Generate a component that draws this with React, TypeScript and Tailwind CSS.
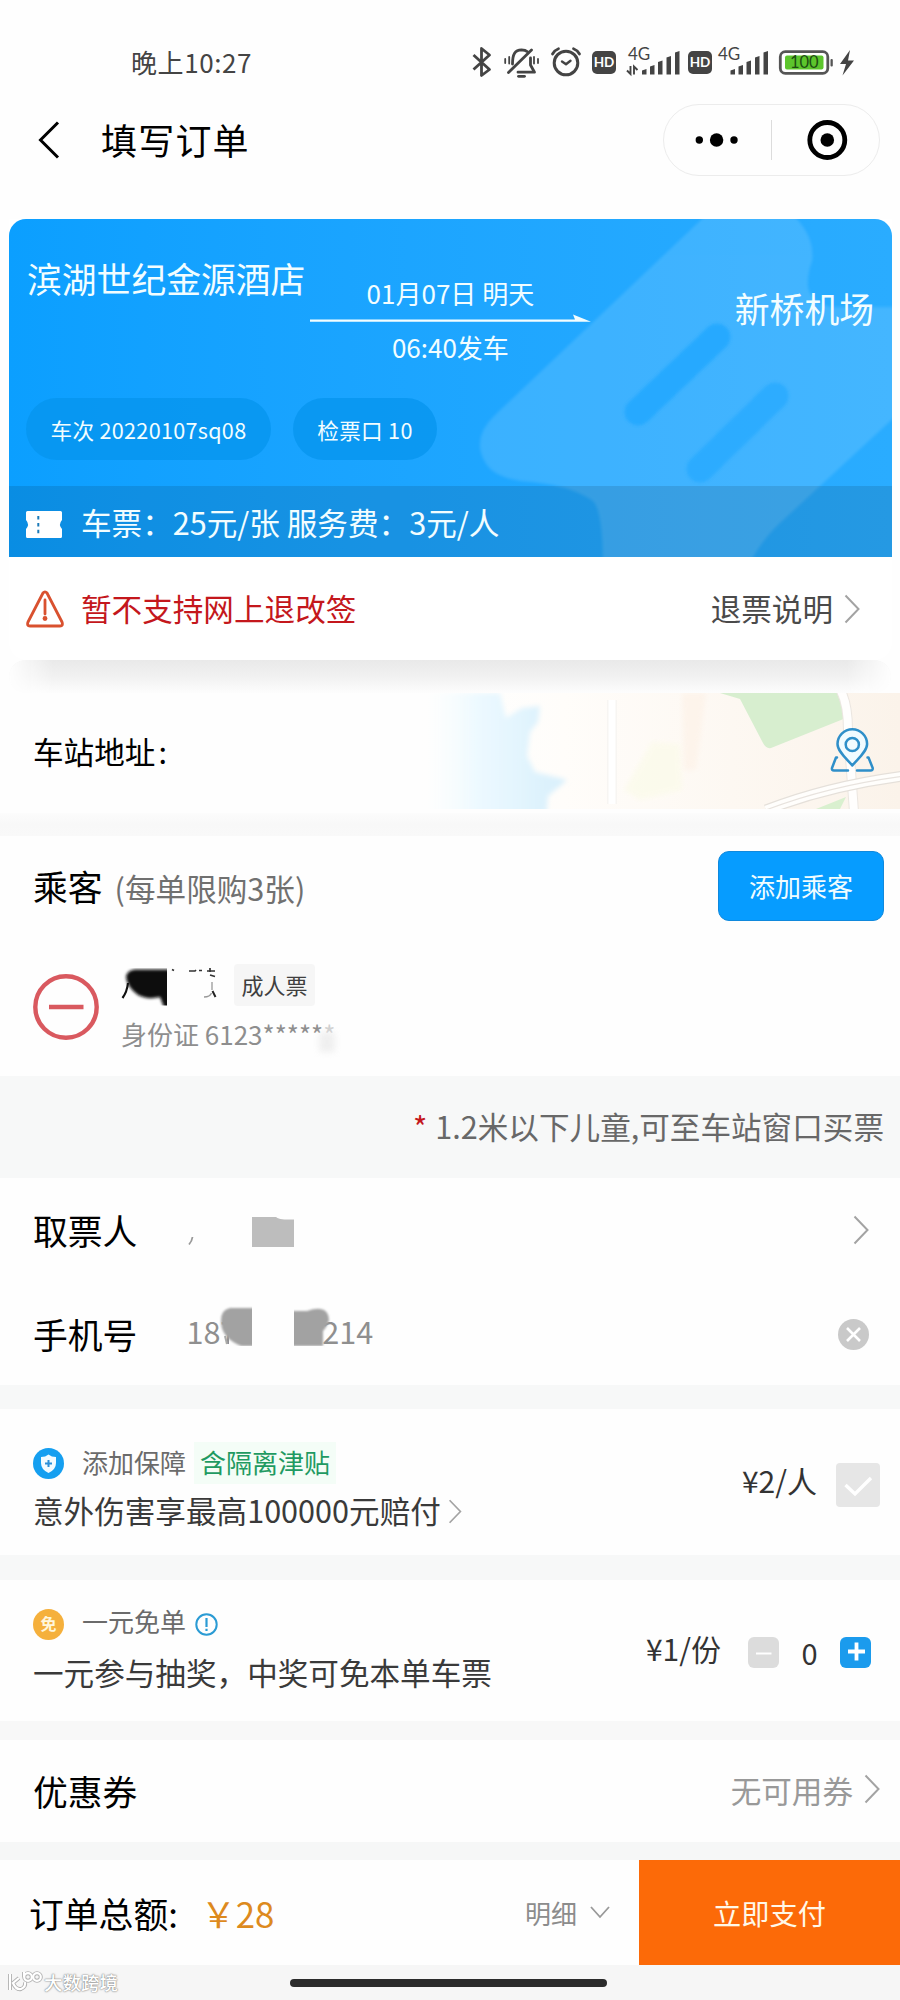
import { useState } from "react";
import type { ReactNode } from "react";

const SIGNAL_BARS = [
  { x: 0, top: 69 },
  { x: 8, top: 65 },
  { x: 16, top: 60.5 },
  { x: 24.5, top: 56 },
  { x: 33, top: 51 },
];

function Signal({ x }: { x: number }) {
  return (
    <g fill="#444">
      {SIGNAL_BARS.map(bar => (
        <path
          key={bar.x}
          d={`M${x + bar.x} ${bar.top + 1.5} l4.5 -1.5 V74.6 h-4.5 Z`}
        />
      ))}
    </g>
  );
}

function HdBadge({ x }: { x: number }) {
  return (
    <g>
      <rect x={x} y="51" width="24" height="23" rx="5" fill="#444" />
      <text x={x + 12} y="67" textAnchor="middle" fontSize="13.5" fontWeight="700" fill="#fff">HD</text>
    </g>
  );
}

function StatusIcons() {
  return (
    <svg
      width="390"
      height="40"
      viewBox="470 43 390 40"
      className="font-[Lato,'Noto_Sans_CJK_SC',sans-serif]"
      fill="none"
      stroke="none"
    >
      {/* bluetooth */}
      <path d="M473.5 55 L489.5 69.5 L481.5 75.5 V48.5 L489.5 55 L473.5 69.5" stroke="#444" strokeWidth="2.8" strokeLinejoin="round" />
      {/* muted bell */}
      <g stroke="#444" strokeWidth="2.8" strokeLinecap="round">
        <path d="M512.5 64 C512.5 54 515 50 521.5 49.8 C524 49.8 526 50.4 527.5 51.8" />
        <path d="M530.5 58 V65 L534.5 72.2 H518" strokeLinejoin="round" />
        <path d="M508.5 72.5 L531.5 50" />
        <path d="M518.5 76.3 h6" />
        <path d="M505.2 59 v4 M509.2 57 v6.5 M534 57 v6.5 M538 59 v4" strokeWidth="1.8" />
      </g>
      {/* alarm */}
      <g stroke="#444" strokeWidth="3" strokeLinecap="round" strokeLinejoin="round">
        <circle cx="566" cy="63" r="11.8" />
        <path d="M552.5 54 q2 -3.8 6 -5.3 M579.5 54 q-2 -3.8 -6 -5.3" strokeWidth="2.8" />
        <path d="M562 61.5 l4 2.8 l4.5 -3.5" strokeWidth="2.4" />
      </g>
      <HdBadge x={592} />
      <text x="628" y="60" fontSize="17" fill="#444">4G</text>
      <path d="M630.5 66 V74 L627 70.5 M634 74.5 V66.5 L637.5 70" stroke="#444" strokeWidth="1.9" />
      <Signal x={642} />
      <HdBadge x={688} />
      <text x="718" y="60" fontSize="17" fill="#444">4G</text>
      <Signal x={730.5} />
      <rect x="780.3" y="51.7" width="47.5" height="21.6" rx="5" stroke="#555" strokeWidth="2.8" />
      <rect x="785" y="55.5" width="38.5" height="14" rx="2" fill="#5cc52c" />
      <text x="804.3" y="68" textAnchor="middle" fontSize="16.5" fill="#1d4d12">100</text>
      <rect x="830.5" y="59" width="2.3" height="7.5" rx="1" fill="#555" />
      <path d="M850 50 L840 64 H846 L842.5 75.5 L854 60.5 H848 Z" fill="#444" />
    </svg>
  );
}

function Chevron({ className = "" }: { className?: string }) {
  return (
    <svg width="16" height="30" viewBox="0 0 16 30" fill="none" className={className}>
      <path d="M1.5 1.5 L14.5 15 L1.5 28.5" stroke="#a3a3a3" strokeWidth="2" />
    </svg>
  );
}

function Planes() {
  return (
    <svg width="883" height="338" viewBox="0 0 883 338" className="absolute inset-0">
      <defs>
        <filter id="edge" filterUnits="userSpaceOnUse" x="0" y="-20" width="903" height="378">
          <feGaussianBlur stdDeviation="1.4" />
        </filter>
      </defs>
      <path
        d="M713 -19 L486 196 Q462 219 476 243 Q484 258 512 262 Q560 265 584 282 Q594 292 594 350 L738 350 Q750 324 770 305 L903 182 V88 H822 Q802 84 799 68 Q798 56 803 42 Q806 20 788 0 L772 -19 Z"
        fill="#ffffff"
        opacity="0.12"
        filter="url(#edge)"
      />
      <path d="M708 118 L629 193" stroke="#22a8ff" strokeWidth="27" strokeLinecap="round" opacity="0.85" filter="url(#edge)" />
      <path d="M766 177 L691 250" stroke="#22a8ff" strokeWidth="27" strokeLinecap="round" opacity="0.65" filter="url(#edge)" />
    </svg>
  );
}

function Pill({ children, className = "" }: { children: ReactNode; className?: string }) {
  return (
    <span className={`flex h-[62px] items-center justify-center rounded-full bg-[#0594ee]/75 pt-0.5 text-[21.6px] tracking-[0.3px] ${className}`}>
      {children}
    </span>
  );
}

function TripCard() {
  return (
    <div className="relative mx-[9px] w-[883px] rounded-b-[18px] bg-white">
      <div className="relative h-[338px] overflow-hidden rounded-t-[17px] bg-linear-to-r from-[#0b9fff] to-[#2aacff] text-[#f2fdff]">
        <Planes />
        <div className="relative flex h-[179px] px-[18px]">
          <h2 className="pt-[33px] text-[34.8px] leading-[52px]">滨湖世纪金源酒店</h2>
          <div className="ml-[4px] w-[282px] pt-[54px] text-center text-[26px] leading-[40px]">
            <p>01月07日 明天</p>
            <svg width="282" height="10" viewBox="0 0 282 10" className="block">
              <path d="M1 6.6 H266 L264 1.5 L282 8.8 H1 Z" fill="#f2fdff" />
            </svg>
            <p className="pt-1">06:40发车</p>
          </div>
          <h2 className="ml-auto pt-[63px] text-[34.8px] leading-[52px]">新桥机场</h2>
        </div>
        <div className="relative flex gap-[22px] pl-[17px]">
          <Pill className="w-[245px]">车次 20220107sq08</Pill>
          <Pill className="w-[144px]">检票口 10</Pill>
        </div>
        <div className="relative mt-[26px] flex h-[71px] items-center bg-black/11 pl-[17px]">
          <svg width="36" height="27" viewBox="0 0 36 27" className="mt-1.5">
            <path d="M1.5 0 H34.5 Q36 0 36 1.5 V9 Q32 13.5 36 18 V25.5 Q36 27 34.5 27 H1.5 Q0 27 0 25.5 V18 Q4 13.5 0 9 V1.5 Q0 0 1.5 0 Z" fill="#fff" />
            <path d="M12.3 5 V23" stroke="#1b7ab8" strokeWidth="2" strokeDasharray="3.5 3.4" />
          </svg>
          <span className="ml-[19px] pt-0.5 text-[30.6px]">车票：25元/张 服务费：3元/人</span>
        </div>
      </div>
      <div className="flex h-[103px] items-center pr-[32px] pl-[17px] text-[30.6px]">
        <svg width="38" height="38" viewBox="0 0 38 38" fill="none">
          <path d="M17 3 Q19 0.6 21 3 L36 32 Q37.4 36 34 36 H4 Q0.6 36 2 32 Z" stroke="#d9512f" strokeWidth="2.8" strokeLinejoin="round" />
          <path d="M19 10 V24" stroke="#d9512f" strokeWidth="2.8" strokeLinecap="round" />
          <circle cx="19" cy="28.5" r="2.4" fill="#d9512f" />
        </svg>
        <span className="ml-[17px] text-[#c4171c]">暂不支持网上退改签</span>
        <span className="ml-auto text-[#4a4a4a]">退票说明</span>
        <Chevron className="ml-[11px]" />
      </div>
    </div>
  );
}

function MapBackground() {
  return (
    <svg width="480" height="116" viewBox="420 693 480 116" className="absolute top-0 right-0">
      <defs>
        <linearGradient id="land" x1="0" x2="1">
          <stop offset="0" stopColor="#fffefb" stopOpacity="0" />
          <stop offset="0.3" stopColor="#fffdfa" />
          <stop offset="1" stopColor="#fbf3ea" />
        </linearGradient>
        <linearGradient id="water" gradientUnits="userSpaceOnUse" x1="425" x2="560" y1="0" y2="0">
          <stop offset="0" stopColor="#f6fdff" stopOpacity="0" />
          <stop offset="0.4" stopColor="#ecf9ff" />
          <stop offset="1" stopColor="#d9f0fc" />
        </linearGradient>
        <filter id="soft"><feGaussianBlur stdDeviation="2.5" /></filter>
      </defs>
      <rect x="420" y="693" width="480" height="116" fill="url(#land)" />
      <path d="M410 693 H500 L506 718 L522 708 L540 706 L538 722 L530 732 L527 756 L535 772 L567 780 L548 796 L545 830 H410 Z" fill="url(#water)" filter="url(#soft)" />
      <path d="M652 742 L680 744 L682 790 L640 800 L624 790 Z" fill="#fbfbe9" opacity="0.7" filter="url(#soft)" />
      <path d="M682 693 H706 L696 770 H684 Z" fill="#fdf0e4" opacity="0.55" filter="url(#soft)" />
      <path d="M612 700 V804" stroke="#f7f5f2" strokeWidth="10" />
      <path d="M612 700 V804" stroke="#ffffff" strokeWidth="7" />
      <path d="M720 693 H837 L846 718 L771 748 Q766 749 763 743 L740 699 Z" fill="#d7eecf" />
      <path d="M816 809 L846 797 L840 809 Z" fill="#d9f0cf" />
      <path d="M841 691 Q848 705 848 730 L854 812" fill="none" stroke="#ebe6e0" strokeWidth="10" />
      <path d="M841 691 Q848 705 848 730 L854 812" fill="none" stroke="#fffefd" strokeWidth="8" />
      <path d="M766 810 Q828 786 904 776" fill="none" stroke="#e5e0da" strokeWidth="11" />
      <path d="M766 810 Q828 786 904 776" fill="none" stroke="#fffefc" strokeWidth="8.5" />
      <path d="M766 810 Q828 786 904 776" fill="none" stroke="#e8e3de" strokeWidth="1.2" />
      <g fill="none" stroke="#2f8fc9" strokeWidth="2.5" strokeLinejoin="round" strokeLinecap="round">
        <path d="M852.3 765.5 C847 759 837.5 751.5 837.5 744 A14.8 14.8 0 0 1 867.1 744 C867.1 751.5 857.6 759 852.3 765.5 Z" fill="#f1fbff" />
        <circle cx="852.3" cy="744.5" r="6.6" />
        <path d="M837 757.5 H836 L832 768 Q831.5 770.5 834 770.5 H848 M867.5 757.5 H868.5 L872.7 768 Q873 770.5 870.5 770.5 H857" />
      </g>
    </svg>
  );
}

function PassengerName() {
  return (
    <svg width="98" height="40" viewBox="122 969 98 40" fill="none" className="mt-1">
      <defs>
        <filter id="smudge" x="-20%" y="-20%" width="140%" height="140%"><feGaussianBlur stdDeviation="1.7" /></filter>
        <clipPath id="nameClip"><rect x="122" y="970" width="46" height="37.5" /></clipPath>
      </defs>
      <g clipPath="url(#nameClip)">
        <path d="M136 971.5 H174 V1012 H166 L161 999 Q148 1002 139 997 Q128 989 127 979 Q128 972 136 971.5 Z" fill="#0c0c0c" filter="url(#smudge)" />
        <path d="M129 985 Q128 994 123.5 1000" stroke="#111" strokeWidth="2.2" />
      </g>
      <path d="M173 971.5 l2 1 M190 973 h6 l1 -1 M200 972.5 h3 M208 973 h8 M211 970 v4 M211 977 l5 1.5" stroke="#333" strokeWidth="1.7" />
      <path d="M213 984 v8 M205 999 q6 0 7.5 -4" stroke="#999" strokeWidth="1.3" />
      <path d="M213.5 993 l3 6" stroke="#222" strokeWidth="2" />
    </svg>
  );
}

function PassengerSection() {
  return (
    <section className="h-[240px] bg-[#fefefe]">
      <div className="flex h-[85px] items-end pr-[16px] pl-[33px]">
        <h3 className="text-[34.8px] leading-[70px] text-black">乘客</h3>
        <span className="ml-[12px] text-[30.6px] leading-[66px] text-[#707070]">(每单限购3张)</span>
        <button className="ml-auto h-[70px] w-[166px] rounded-[11px] border border-[#1089dd] bg-[#069cff] pb-0.5 text-[26px] text-[#f0fcff]">添加乘客</button>
      </div>
      <div className="flex pt-[41px] pl-[33px]">
        <svg width="66" height="66" viewBox="0 0 66 66" className="mt-[12px]">
          <circle cx="33" cy="33" r="30.7" fill="none" stroke="#d9595f" strokeWidth="4.4" />
          <path d="M16 33 H50.5" stroke="#d9595f" strokeWidth="4.6" />
        </svg>
        <div className="ml-[22px]">
          <div className="flex h-[46px] items-center">
            <PassengerName />
            <span className="ml-[15px] flex h-[42px] w-[81px] items-center justify-center rounded-sm bg-[#f6f6f6] pb-0.5 text-[22px] text-[#3f3f3f]">成人票</span>
          </div>
          <p className="flex items-center text-[26px] leading-[52px] text-[#8e8e8e]">
            身份证 6123
            <span>*****</span>
            <span className="text-[#d0d0d0]">*</span>
            <i className="mt-4 -ml-4 block h-5 w-4 bg-[#e6e6e6] opacity-60 blur-[3px]" />
          </p>
        </div>
      </div>
    </section>
  );
}

function PickupSection({ phone, onClear }: { phone: string; onClear: () => void }) {
  return (
    <section className="h-[207px] bg-[#fefefe]">
      <div className="flex h-[103px] items-center pr-[31px] pl-[33px]">
        <h3 className="pt-0.5 text-[34.8px] text-black">取票人</h3>
        <svg width="110" height="34" viewBox="0 0 110 34" className="mt-1 ml-[51px]">
          <path d="M1 29.5 Q4 26 4.5 22" fill="none" stroke="#999" strokeWidth="1.8" />
          <path d="M64 2 H88 Q90 5 106 4.5 V32 H64 Z" fill="#bdbdbd" />
        </svg>
        <Chevron className="ml-auto" />
      </div>
      <div className="flex h-[104px] items-center pr-[31px] pl-[33px]">
        <h3 className="pt-0.5 text-[34.8px] text-black">手机号</h3>
        <div className="relative -mt-0.5 ml-[49px] text-[30.6px] text-[#8f8f8f]">
          {phone}
          {/* middle digits stay hidden */}
          <svg width="187" height="46" viewBox="0 0 187 46" className="absolute -top-[3px] left-px">
            <defs>
              <filter id="mask"><feGaussianBlur stdDeviation="1.3" /></filter>
            </defs>
            <path d="M42 8 H136 V42 H42 Z" fill="#fefefe" />
            <path d="M38 30 L40 38" stroke="#aaa" strokeWidth="2" />
            <path d="M43 2 H70 V40 H54 Q37 33 34.5 20 Q32 4 43 2 Z M102 5 H120 Q141 -2 142 14 Q140 21 136 25 V40 H102 Z" fill="#a2a2a2" filter="url(#mask)" />
            <path d="M65 0 H107 V46 H65 Z M30 40 H137 V46 H30 Z" fill="#fefefe" />
          </svg>
        </div>
        <button className="mt-0.5 ml-auto" onClick={onClear}>
          <svg width="31" height="31" viewBox="0 0 31 31" className="block">
            <circle cx="15.5" cy="15.5" r="15.5" fill="#c9c9c9" />
            <path d="M9 9 L22 22 M22 9 L9 22" stroke="#fff" strokeWidth="2.6" />
          </svg>
        </button>
      </div>
    </section>
  );
}

function InsuranceSection() {
  return (
    <section className="flex h-[146px] bg-[#fefefe] pr-[20px] pl-[33px]">
      <div className="pt-[31px]">
        <div className="flex h-[46px] items-center text-[26px]">
          <svg width="31" height="31" viewBox="0 0 31 31">
            <circle cx="15.5" cy="15.5" r="15.5" fill="#159ff0" />
            <path d="M15.5 6.5 Q18.5 9 23 9 V15 Q23 21.5 15.5 25 Q8 21.5 8 15 V9 Q12.5 9 15.5 6.5 Z" fill="#f2fbff" />
            <path d="M15.5 12 V19 M12 15.5 H19" stroke="#2a8fd8" strokeWidth="2" />
          </svg>
          <span className="ml-[18px] pb-1 text-[#6b6b6b]">添加保障</span>
          <span className="ml-[8px] flex h-[42px] items-center bg-[#f4fdf7] px-[6px] pb-1 text-[#1f9a62]">含隔离津贴</span>
        </div>
        <div className="flex items-center pt-px">
          <span className="text-[30.6px] leading-[46px] text-[#3a3a3a]">意外伤害享最高100000元赔付</span>
          <Chevron className="mt-0.5 ml-[7px] h-[25px] w-[14px]" />
        </div>
      </div>
      <span className="ml-auto pt-[49px] text-[30px] text-[#333]">¥2/人</span>
      <svg width="44" height="44" viewBox="0 0 44 44" className="mt-[54px] ml-[19px]">
        <rect width="44" height="44" rx="4" fill="#e6e6e6" />
        <path d="M9.5 22 L19 31 L35 15" fill="none" stroke="#fff" strokeWidth="3.4" />
      </svg>
    </section>
  );
}

function LotterySection() {
  const [count, setCount] = useState(0);

  return (
    <section className="flex h-[141px] bg-[#fefefe] pr-[29px] pl-[33px]">
      <div className="pt-[21px]">
        <div className="flex h-[46px] items-center text-[26px]">
          <span className="flex h-[31px] w-[31px] items-center justify-center rounded-full bg-[#f5b03c] pb-0.5 text-[16px] font-bold text-[#fff6dc]">免</span>
          <span className="ml-[18px] pb-2 text-[#6b6b6b]">一元免单</span>
          <svg width="23" height="23" viewBox="0 0 23 23" className="ml-[9px]">
            <circle cx="11.5" cy="11.5" r="10.2" fill="none" stroke="#2b9bd4" strokeWidth="2" />
            <path d="M11.5 5 V14 M11.5 15.8 V18" stroke="#2b9bd4" strokeWidth="2.2" />
          </svg>
        </div>
        <p className="text-[30.6px] leading-[50px] text-[#3a3a3a]">一元参与抽奖，中奖可免本单车票</p>
      </div>
      <span className="ml-auto pt-[45px] text-[30px] leading-[46px] text-[#333]">¥1/份</span>
      <div className="mt-[57px] ml-[27px] flex h-[31px] w-[123px] items-center justify-between">
        <button onClick={() => setCount(Math.max(0, count - 1))}>
          <svg width="31" height="31" viewBox="0 0 31 31">
            <rect width="31" height="31" rx="6" fill="#dcdcdc" />
            <path d="M8 16.5 H23.5" stroke="#fff" strokeWidth="2" />
          </svg>
        </button>
        <span className="text-[29px] leading-none text-[#333]">{count}</span>
        <button onClick={() => setCount(count + 1)}>
          <svg width="31" height="31" viewBox="0 0 31 31">
            <rect width="31" height="31" rx="6" fill="#1b9bed" />
            <path d="M8 14.5 H25 M16.5 5.5 V23.5" stroke="#fff" strokeWidth="3.8" />
          </svg>
        </button>
      </div>
    </section>
  );
}

function Footer() {
  return (
    <footer>
      <div className="flex h-[105px] items-center bg-[#fefefe]">
        <span className="pt-0.5 pl-[29px] text-[34.8px] text-black">订单总额:</span>
        <span className="ml-[23px] pt-0.5 text-[34.8px] text-[#dd8a1e]">￥28</span>
        <span className="ml-auto text-[26px] text-[#8c8c8c]">明细</span>
        <svg width="20" height="13" viewBox="0 0 20 13" className="mr-[29px] ml-[13px]">
          <path d="M1 1 L10 11 L19 1" fill="none" stroke="#999" strokeWidth="1.8" />
        </svg>
        <button className="h-full w-[261px] bg-[#fc6a08] pt-px text-[28.2px] text-[#fff8e8]">立即支付</button>
      </div>
      <div className="relative h-[35px] bg-[#f6f6f6] pt-[14px]">
        <div className="ml-[290px] h-2 w-[317px] rounded-full bg-[#2b2b2b]" />
        <div className="absolute top-[3px] left-[7px] flex items-center text-[18.5px] leading-[28px] font-medium text-white [text-shadow:0_0_2px_#777,0_0_1px_#888]">
          <svg width="37" height="25" viewBox="0 0 37 25" fill="none">
            <g stroke="#b0b0b0" strokeWidth="4">
              <path d="M3 4 V20 M12 8 L6 13 Q9 20 14 19 Q19 17 18 12 M17 2 V7" />
              <circle cx="21" cy="7" r="3.8" />
              <circle cx="30" cy="7" r="3.8" />
            </g>
            <g stroke="#fff" strokeWidth="2.2">
              <path d="M3 4 V20 M12 8 L6 13 Q9 20 14 19 Q19 17 18 12 M17 2 V7" />
              <circle cx="21" cy="7" r="3.8" />
              <circle cx="30" cy="7" r="3.8" />
            </g>
          </svg>
          大数跨境
        </div>
      </div>
    </footer>
  );
}

export default function App() {
  const [phone, setPhone] = useState("18700000214");

  return (
    <div className="h-[2000px] w-[900px] overflow-hidden bg-[#fefefe] font-['Noto_Sans_CJK_SC',sans-serif]">
      <div className="flex h-[104px] items-center justify-between pt-[22px] pr-[40px] pl-[131px]">
        <span className="pb-1 text-[26px] tracking-[0.6px] text-[#444]">晚上10:27</span>
        <StatusIcons />
      </div>
      <header className="flex h-[72px] items-center pr-[20px] pl-[38px]">
        <svg width="22" height="38" viewBox="0 0 22 38" fill="none">
          <path d="M20 1.5 L2.5 19 L20 36.5" stroke="#000" strokeWidth="3" />
        </svg>
        <h1 className="ml-[41px] pb-0.5 text-[36px] tracking-[1.2px] text-black">填写订单</h1>
        <div className="ml-auto flex h-[72px] w-[217px] items-center rounded-full border border-[#ececec]">
          <svg width="217" height="70" viewBox="664 105 217 70" className="shrink-0">
            <circle cx="699.3" cy="140" r="3.7" />
            <circle cx="716.6" cy="140" r="6.7" />
            <circle cx="734" cy="140" r="3.7" />
            <path d="M771.5 120 V160" stroke="#dcdcdc" strokeWidth="1" />
            <circle cx="827.3" cy="140" r="17.5" fill="none" stroke="#000" strokeWidth="4.8" />
            <circle cx="827.3" cy="140" r="6.8" />
          </svg>
        </div>
      </header>

      <main className="pt-[43px]">
        <TripCard />
        <div className="mx-[9px] h-[33px] rounded-[18px] bg-linear-to-b from-[#e9e9e9] via-[#f1f1f1] to-[#fdfdfd] mask-x-from-95% mask-x-to-100%" />

        <section className="relative flex h-[120px] items-center pl-[33px]">
          <MapBackground />
          <span className="relative pb-0.5 text-[30.6px] text-black">
            车站地址<span className="ml-[3px]">:</span>
          </span>
        </section>
        <div className="h-[23px] bg-linear-to-b from-[#fcfcfc] via-[#f8f8f8] to-[#f9f9f9]" />

        <PassengerSection />
        <p className="flex h-[102px] items-center justify-end bg-[#f7f8f8] pr-[16px] text-[30.6px] text-[#686868]">
          <span className="mr-[8px] text-[#c4171c]">*</span>1.2米以下儿童,可至车站窗口买票
        </p>

        <PickupSection phone={phone} onClear={() => setPhone("")} />
        <div className="h-[24px] bg-[#f7f8f8]" />
        <InsuranceSection />
        <div className="h-[25px] bg-[#f7f8f8]" />
        <LotterySection />
        <div className="h-[19px] bg-[#f8f8f8]" />

        <section className="flex h-[102px] items-center bg-[#fefefe] pr-[20px] pl-[33px]">
          <h3 className="text-[34.8px] text-black">优惠券</h3>
          <span className="ml-auto text-[30.6px] text-[#999]">无可用券</span>
          <Chevron className="mb-1 ml-[11px]" />
        </section>
        <div className="h-[18px] bg-[#f6f7f7]" />
      </main>
      <Footer />
    </div>
  );
}
